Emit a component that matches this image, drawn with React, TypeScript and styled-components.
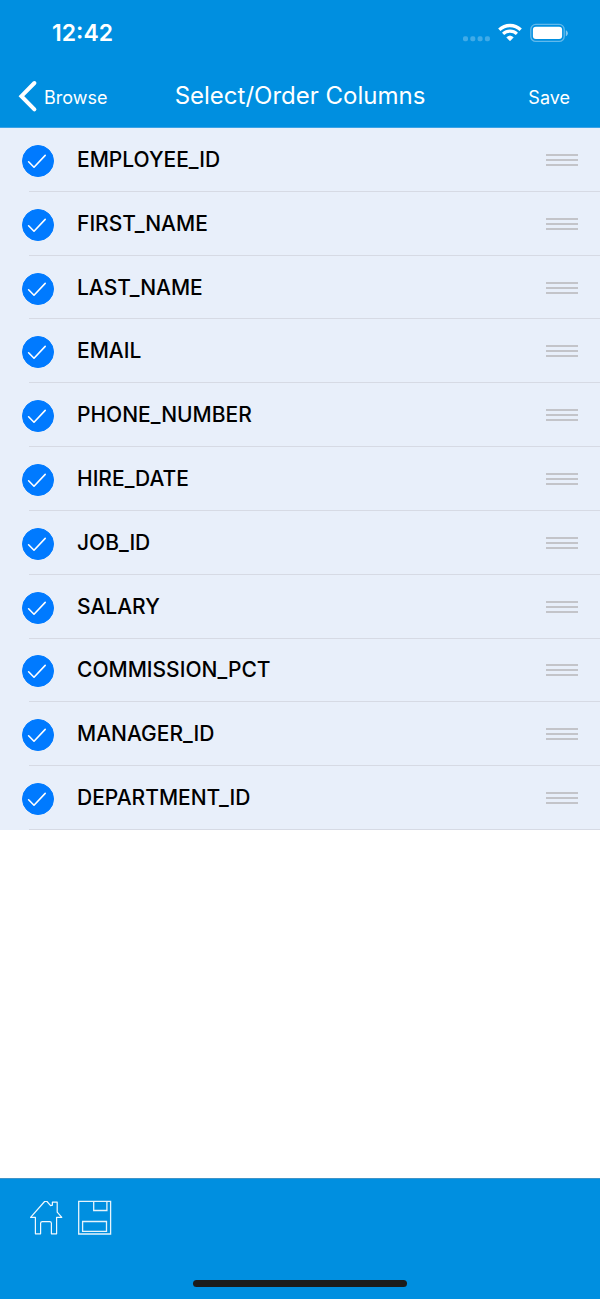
import React, { useState } from "react";
import styled, { createGlobalStyle } from "styled-components";

const GlobalStyle = createGlobalStyle`
  *, *::before, *::after { box-sizing: border-box; }
  body {
    margin: 0;
    background: #ffffff;
    color: #000000;
    font-family: Inter, "Liberation Sans", sans-serif;
  }
  button {
    margin: 0;
    padding: 0;
    border: 0;
    background: none;
    color: inherit;
    font: inherit;
    cursor: pointer;
  }
  svg { display: block; }
`;

const Screen = styled.div`
  display: flex;
  flex-direction: column;
  min-height: 100vh;
`;

const Header = styled.header`
  background: #008fe0;
  color: #ffffff;
  border-bottom: 1px solid #3ba2e6;
`;

const StatusBar = styled.div`
  display: flex;
  align-items: center;
  justify-content: space-between;
  height: 66px;
  padding: 0 32px 0 52px;
`;

const Clock = styled.time`
  font-size: 23px;
  font-weight: 600;
  line-height: 28px;
`;

const StatusIcons = styled.div`
  display: flex;
  align-items: center;
  gap: 8px;
  padding-bottom: 2px;
`;

const NavBar = styled.nav`
  display: grid;
  grid-template-columns: 1fr auto 1fr;
  align-items: center;
  height: 61px;
  padding: 0 18px 1px;
`;

const NavButton = styled.button<{ $end?: boolean }>`
  display: flex;
  align-items: center;
  gap: 6px;
  justify-self: ${(p) => (p.$end ? "end" : "start")};
  padding-right: ${(p) => (p.$end ? "12px" : "0")};
  font-size: 18px;
  line-height: 24px;
`;

const NavText = styled.span`
  padding-top: 4px;
`;

const Title = styled.h1`
  margin: 0;
  font-size: 24px;
  font-weight: 400;
  line-height: 30px;
`;

const Main = styled.main`
  flex: 1;
`;

const ColumnList = styled.ul`
  display: grid;
  grid-auto-rows: 1fr;
  min-height: 702px;
  margin: 0;
  padding: 0;
  list-style: none;
  background: #e8effa;
`;

const ColumnRow = styled.li`
  display: flex;
  align-items: center;
  gap: 16px;
  padding: 0 22px;
  background: linear-gradient(#d6dae4, #d6dae4) 29px 100% / 100% 1px no-repeat;
`;

const ColumnLabel = styled.label`
  display: flex;
  flex: 1;
  align-items: center;
  gap: 23px;
  font-size: 21px;
  font-weight: 500;
  line-height: 28px;
  cursor: pointer;
`;

const CheckBox = styled.span`
  display: grid;
  padding-top: 2px;

  & > * { grid-area: 1 / 1; }
  & > svg { pointer-events: none; visibility: hidden; }
  & > input:checked + svg { visibility: visible; }
`;

const CheckInput = styled.input`
  appearance: none;
  width: 32px;
  height: 32px;
  margin: 0;
  border: 1px solid #c7c7cc;
  border-radius: 50%;
  cursor: pointer;

  &:checked {
    border-color: #007aff;
    background: #007aff;
  }
`;

const DragHandle = styled.button`
  cursor: grab;
`;

const Footer = styled.footer`
  display: flex;
  flex-direction: column;
  justify-content: space-between;
  height: 121px;
  padding: 21px 29px 12px;
  background: #008fe0;
  border-top: 1px solid #3f94c8;
`;

const ToolBar = styled.div`
  display: flex;
  gap: 14px;
`;

const HomeIndicator = styled.div`
  align-self: center;
  width: 214px;
  height: 7px;
  border-radius: 4px;
  background: #1c1c1c;
`;

const SignalIcon = () => (
  <svg width="27" height="24" viewBox="0 0 27 24" fill="#fff" fillOpacity="0.25" aria-hidden="true">
    {[0, 7.3, 14.6, 21.9].map((x) => (
      <rect key={x} x={x} y="16.3" width="5" height="5" rx="1.8" />
    ))}
  </svg>
);

const WifiIcon = () => (
  <svg width="24" height="24" viewBox="0 0 24 24" fill="none" stroke="#fff" aria-hidden="true">
    <path d="M1.3 9.8a15.4 15.4 0 0 1 21.4 0" strokeWidth="3.3" />
    <path d="M5.1 13.9a9.9 9.9 0 0 1 13.8 0" strokeWidth="3.1" />
    <path d="M12 20.7l-3.2-3.3a4.7 4.7 0 0 1 6.4 0z" fill="#fff" strokeWidth="0.8" />
  </svg>
);

const BatteryIcon = () => (
  <svg width="38" height="24" viewBox="0 0 38 24" aria-hidden="true">
    <rect x="0.8" y="4.4" width="33.4" height="17" rx="5" fill="none" stroke="#fff" strokeOpacity="0.38" strokeWidth="1.3" />
    <rect x="2.9" y="6.8" width="29.2" height="12.3" rx="3" fill="#fff" />
    <path d="M35.8 10.2c2.7 1 2.7 5 0 6z" fill="#fff" fillOpacity="0.5" />
  </svg>
);

const BackIcon = () => (
  <svg width="20" height="34" viewBox="0 0 20 34" fill="none" stroke="#fff" strokeWidth="4" strokeLinecap="round" strokeLinejoin="miter" aria-hidden="true">
    <path d="M16.4 4L3.4 17.2L16.4 30.4" />
  </svg>
);

const CheckIcon = () => (
  <svg width="32" height="32" viewBox="0 0 32 32" fill="none" stroke="#fff" strokeWidth="1.6" strokeLinecap="round" strokeLinejoin="round" aria-hidden="true">
    <path d="M6.6 16.8L12 22.2L23.2 10.4" />
  </svg>
);

const GripIcon = () => (
  <svg width="32" height="14" viewBox="0 0 32 14" stroke="#c3c4c9" strokeWidth="2" aria-hidden="true">
    <path d="M0 2H32M0 7H32M0 12H32" />
  </svg>
);

const HomeIcon = () => (
  <svg width="35" height="36" viewBox="0 0 35 36" fill="none" stroke="#fff" strokeOpacity="0.95" strokeWidth="1.2" strokeLinejoin="round" aria-hidden="true">
    <path d="M15.6 1.5H18L21.6 5.6L23.4 5.2V2.2H28.2V12.2L32.8 17.4H27.6V33.8H22.4V23.2Q22.4 21.6 20.6 21.6H13.4Q11.6 21.6 11.6 23.2V33.8H6.4V17.4H1.6Z" />
  </svg>
);

const SaveIcon = () => (
  <svg width="34" height="36" viewBox="0 0 34 36" fill="none" stroke="#fff" strokeOpacity="0.9" strokeWidth="1.3" aria-hidden="true">
    <path d="M0.7 1.4H32.6V34H0.7ZM15.7 1.4V10.5H28.9V1.4M4.6 21.5H28.5V31.3H4.6Z" />
  </svg>
);

const columnNames = [
  "EMPLOYEE_ID",
  "FIRST_NAME",
  "LAST_NAME",
  "EMAIL",
  "PHONE_NUMBER",
  "HIRE_DATE",
  "JOB_ID",
  "SALARY",
  "COMMISSION_PCT",
  "MANAGER_ID",
  "DEPARTMENT_ID",
];

export default function App() {
  const [selected, setSelected] = useState<string[]>(columnNames);

  const toggle = (name: string) =>
    setSelected((current) =>
      current.includes(name) ? current.filter((n) => n !== name) : [...current, name]
    );

  return (
    <Screen>
      <GlobalStyle />
      <Header>
        <StatusBar>
          <Clock>12:42</Clock>
          <StatusIcons>
            <SignalIcon />
            <WifiIcon />
            <BatteryIcon />
          </StatusIcons>
        </StatusBar>
        <NavBar>
          <NavButton type="button">
            <BackIcon />
            <NavText>Browse</NavText>
          </NavButton>
          <Title>Select/Order Columns</Title>
          <NavButton type="button" $end>
            <NavText>Save</NavText>
          </NavButton>
        </NavBar>
      </Header>
      <Main>
        <ColumnList>
          {columnNames.map((name) => (
            <ColumnRow key={name}>
              <ColumnLabel htmlFor={name}>
                <CheckBox>
                  <CheckInput
                    id={name}
                    type="checkbox"
                    checked={selected.includes(name)}
                    onChange={() => toggle(name)}
                  />
                  <CheckIcon />
                </CheckBox>
                {name}
              </ColumnLabel>
              <DragHandle type="button" aria-label={`Reorder ${name}`}>
                <GripIcon />
              </DragHandle>
            </ColumnRow>
          ))}
        </ColumnList>
      </Main>
      <Footer>
        <ToolBar>
          <button type="button" aria-label="Home">
            <HomeIcon />
          </button>
          <button type="button" aria-label="Save">
            <SaveIcon />
          </button>
        </ToolBar>
        <HomeIndicator />
      </Footer>
    </Screen>
  );
}
